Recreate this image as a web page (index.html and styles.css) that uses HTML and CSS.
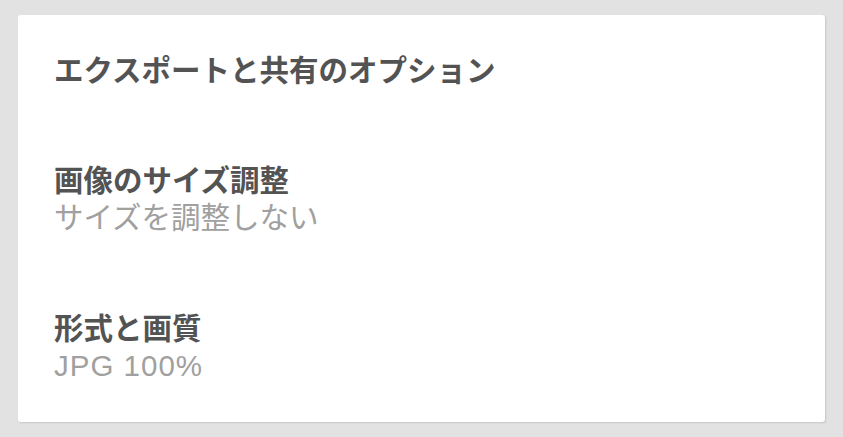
FILE: index.html
```html
<!DOCTYPE html>
<html lang="ja">
<head>
  <meta charset="UTF-8">
  <title>エクスポートと共有のオプション</title>
  <meta name="viewport" content="width=device-width, initial-scale=1.0">
  <link rel="stylesheet" href="styles.css">
</head>
<body>

  <div class="card">
    <h1 class="card-title">エクスポートと共有のオプション</h1>

    <div class="option">
      <div class="option-label">画像のサイズ調整</div>
      <div class="option-value">サイズを調整しない</div>
    </div>

    <div class="option">
      <div class="option-label">形式と画質</div>
      <div class="option-value latin">JPG 100%</div>
    </div>
  </div>

</body>
</html>
```

FILE: styles.css
```css
body {
  margin: 0;
  padding: 15px 18px;
  background-color: #e2e2e2;
  font-family: "Liberation Sans", "Noto Sans CJK JP", sans-serif;
}

.card {
  background: #ffffff;
  border-radius: 3px;
  box-shadow: 1px 1px 2px rgba(0, 0, 0, 0.12);
  padding: 37px 36px 37px 36px;
  height: 333px;
}

.card-title {
  margin: 0 0 73px 0;
  font-size: 29.5px;
  line-height: 37px;
  font-weight: bold;
  color: #535353;
}

.option + .option {
  margin-top: 74px;
}

.option-label {
  font-size: 29.5px;
  line-height: 37px;
  font-weight: bold;
  color: #535353;
}

.option-value {
  font-size: 29.5px;
  line-height: 37px;
  color: #a0a0a0;
}

.option-value.latin {
  letter-spacing: 1px;
}
```
